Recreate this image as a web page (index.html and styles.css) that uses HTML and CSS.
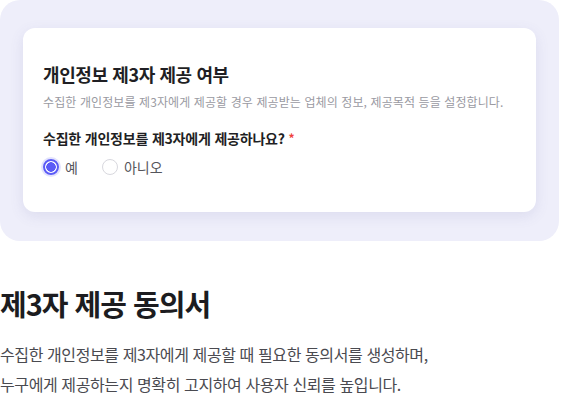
FILE: index.html
```html
<!DOCTYPE html>
<html lang="ko">
<head>
    <meta charset="UTF-8">
    <meta name="viewport" content="width=device-width, initial-scale=1.0">
    <title>제3자 제공 동의서</title>
    <link rel="stylesheet" href="styles.css">
</head>
<body>
    <div class="preview">
        <div class="card">
            <h2 class="card-title">개인정보 제3자 제공 여부</h2>
            <p class="card-desc">수집한 개인정보를 제3자에게 제공할 경우 제공받는 업체의 정보, 제공목적 등을 설정합니다.</p>
            <p class="question">수집한 개인정보를 제3자에게 제공하나요? <span class="required">*</span></p>
            <div class="options">
                <label class="option"><span class="radio checked"></span>예</label>
                <label class="option"><span class="radio"></span>아니오</label>
            </div>
        </div>
    </div>

    <section class="intro">
        <h1>제3자 제공 동의서</h1>
        <p>수집한 개인정보를 제3자에게 제공할 때 필요한 동의서를 생성하며,<br>
        누구에게 제공하는지 명확히 고지하여 사용자 신뢰를 높입니다.</p>
    </section>
</body>
</html>
```

FILE: styles.css
```css
body {
    margin: 0;
    font-family: "Noto Sans CJK KR", "Noto Sans", sans-serif;
    color: #222;
    background: #fff;
}

.preview {
    width: 559px;
    box-sizing: border-box;
    padding: 28px 23px 29px 23px;
    background-color: #eeeefa;
    border-radius: 20px;
}

.card {
    background: #fff;
    border-radius: 12px;
    padding: 33px 20px 35px 20px;
    box-shadow: 0 4px 14px rgba(90, 90, 160, 0.12);
}

.card-title {
    margin: 0;
    font-size: 18px;
    font-weight: 700;
    line-height: 26px;
    color: #1f1f24;
    letter-spacing: -0.4px;
}

.card-desc {
    margin: 6px 0 0 0;
    font-size: 12px;
    line-height: 18px;
    color: #9a9aa2;
    letter-spacing: 0.1px;
}

.question {
    margin: 17px 0 0 0;
    font-size: 14px;
    font-weight: 600;
    line-height: 20px;
    color: #1f1f24;
    letter-spacing: -0.2px;
}

.required {
    color: #f0423c;
    font-size: 12px;
    vertical-align: top;
}

.options {
    display: flex;
    gap: 24px;
    margin-top: 9px;
}

.option {
    display: flex;
    align-items: center;
    gap: 6px;
    font-size: 14px;
    line-height: 20px;
    color: #55555c;
}

.radio {
    width: 16px;
    height: 16px;
    box-sizing: border-box;
    border: 1px solid #d8d8de;
    border-radius: 50%;
    background: #fff;
}

.radio.checked {
    border: 2px solid #5b5bf6;
    background: radial-gradient(circle, #5b5bf6 0 4.5px, #fff 5px);
    box-shadow: 0 0 0 2px #e3e3fd;
}

.intro h1 {
    margin: 42px 0 0 0;
    font-size: 29px;
    font-weight: 700;
    line-height: 40px;
    color: #1c1c20;
    letter-spacing: -1px;
}

.intro p {
    margin: 16px 0 0 0;
    font-size: 16px;
    line-height: 30px;
    color: #4a4a50;
    letter-spacing: -0.4px;
}
```
